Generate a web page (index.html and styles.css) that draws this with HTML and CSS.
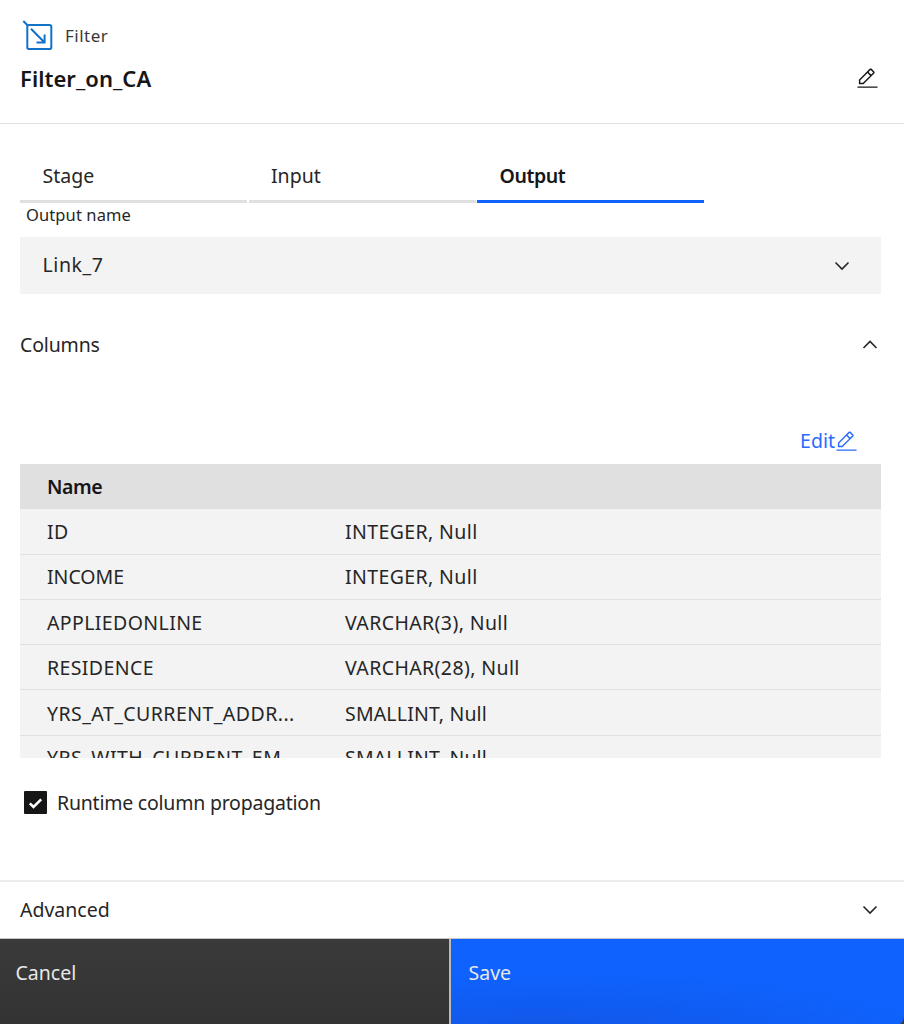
FILE: index.html
```html
<!DOCTYPE html>
<html lang="en">
<head>
<meta charset="utf-8">
<title>Filter_on_CA</title>
<link rel="stylesheet" href="styles.css">
</head>
<body>
<main class="panel">
  <header class="header">
    <div class="stage-type">
      <svg class="stage-icon" width="32" height="32" viewBox="0 0 32 32" fill="none" stroke="#1272c8" stroke-width="2">
        <rect x="5.300" y="5" width="24" height="24" rx="1.800"/>
        <path d="M1.300 1l4.200 4.200M9 8.700l13.300 13.600M14.500 22.600H22.600V14.500"/>
      </svg>
      <span class="type-label">Filter</span>
    </div>
    <div class="title-row">
      <h1 class="title">Filter_on_CA</h1>
      <svg class="pencil" width="23" height="23" viewBox="0 0 32 32" fill="currentColor"><path d="M2 27h28v2H2zM25.400 9c.8-.8.8-2 0-2.800l-3.600-3.600c-.8-.8-2-.8-2.800 0l-15 15V24h6.400l15-15zm-5-5L24 7.600l-3 3L17.400 7l3-3zM6 22v-3.600l10-10 3.600 3.600-10 10H6z"/></svg>
    </div>
  </header>
  <nav class="tabs">
    <a class="tab tab-stage">Stage</a>
    <a class="tab tab-input">Input</a>
    <a class="tab tab-output active">Output</a>
  </nav>
  <label class="field-label">Output name</label>
  <div class="select">
    <span class="link-name">Link_7</span>
    <svg width="16" height="10" viewBox="0 0 16 10" fill="none" stroke="#262626" stroke-width="1.600"><path d="M1.500 1.500L8 8l6.500-6.500"/></svg>
  </div>
  <section class="section-head">
    <span class="columns-label">Columns</span>
    <svg width="16" height="10" viewBox="0 0 16 10" fill="none" stroke="#262626" stroke-width="1.600"><path d="M1.500 8L8 1.500l6.500 6.500"/></svg>
  </section>
  <div class="edit">
    <span class="edit-label">Edit</span>
    <svg class="pencil" width="23" height="23" viewBox="0 0 32 32" fill="currentColor"><path d="M2 27h28v2H2zM25.400 9c.8-.8.8-2 0-2.800l-3.600-3.600c-.8-.8-2-.8-2.800 0l-15 15V24h6.400l15-15zm-5-5L24 7.600l-3 3L17.400 7l3-3zM6 22v-3.600l10-10 3.600 3.600-10 10H6z"/></svg>
  </div>
  <div class="table">
    <div class="row head"><span class="name-head">Name</span></div>
    <div class="row"><span>ID</span><span>INTEGER, Null</span></div>
    <div class="row income"><span class="tight">INCOME</span><span>INTEGER, Null</span></div>
    <div class="row"><span>APPLIEDONLINE</span><span>VARCHAR(3), Null</span></div>
    <div class="row"><span>RESIDENCE</span><span>VARCHAR(28), Null</span></div>
    <div class="row"><span class="long">YRS_AT_CURRENT_ADDR...</span><span class="smallint">SMALLINT, Null</span></div>
    <div class="row last"><span class="long">YRS_WITH_CURRENT_EM...</span><span class="smallint">SMALLINT, Null</span></div>
  </div>
  <div class="check-row">
    <svg width="23" height="23" viewBox="0 0 23 23"><rect width="23" height="23" rx="1" fill="#161616"/><path d="M5.800 12.300l3.700 3.700 7.700-7.700" fill="none" stroke="#fff" stroke-width="2.600"/></svg>
    <span class="check-label">Runtime column propagation</span>
  </div>
  <section class="advanced">
    <span class="advanced-label">Advanced</span>
    <svg width="16" height="10" viewBox="0 0 16 10" fill="none" stroke="#262626" stroke-width="1.600"><path d="M1.500 1.500L8 8l6.500-6.500"/></svg>
  </section>
  <footer class="footer">
    <button class="cancel"><span>Cancel</span></button>
    <button class="save"><span>Save</span></button>
  </footer>
</main>
</body>
</html>
```
FILE: styles.css
```css
* { box-sizing: border-box; }
body { margin: 0; background: #fff; }
.panel {
  width: 904px; height: 1024px; overflow: hidden;
  display: flex; flex-direction: column;
  font: 19.500px/28px "Noto Sans", sans-serif;
  color: #262626;
}
.panel > * { flex-shrink: 0; }
svg { display: block; flex-shrink: 0; }
span, h1 { white-space: nowrap; }
.header { height: 124px; border-bottom: 1px solid #e0e0e0; padding: 20px 25px 0 20px; }
.stage-type { display: flex; align-items: center; height: 32px; }
.stage-icon { margin-left: 2px; margin-right: 11px; }
.type-label { font-size: 17px; letter-spacing: .5px; color: #393939; }
.title-row { display: flex; justify-content: space-between; align-items: center; height: 32px; margin-top: 10px; }
.title { margin: 0; font-size: 22px; line-height: 32px; font-weight: 600; letter-spacing: .05px; color: #161616; }
.title-row .pencil { color: #161616; }
.tabs { display: flex; gap: 1.500px; height: 55px; margin: 24px 0 0 20px; }
.tab { width: 227px; height: 55px; padding: 14px 0 0 22.500px; border-bottom: 3px solid #e0e0e0; }
.active { border-color: #0f62fe; font-weight: 600; letter-spacing: -.4px; color: #161616; }
.field-label { font-size: 16.500px; line-height: 24px; height: 34px; padding-left: 26px; letter-spacing: .1px; }
.select { height: 57px; margin: 0 23px 0 20px; padding: 0 31px 0 22.500px; background: #f3f3f3; display: flex; justify-content: space-between; align-items: center; }
.link-name { letter-spacing: .6px; padding-bottom: 1px; }
.section-head { display: flex; justify-content: space-between; align-items: center; height: 28px; margin: 37px 26px 0 20px; }
.columns-label { letter-spacing: -.15px; }
.edit { display: flex; justify-content: flex-end; align-items: center; height: 28px; margin: 68px 46px 0 0; color: #2b6bfe; }
.table { height: 294px; margin: 9px 23px 0 20px; background: #f3f3f3; overflow: hidden; }
.row { display: grid; grid-template-columns: 298px 1fr; align-items: center; height: 45.300px; padding: 2px 0 0 27px; border-bottom: 1px solid #e0e0e0; letter-spacing: .39px; }
.income, .last { padding-top: 0; }
.tight { letter-spacing: 0; }
.long { letter-spacing: .45px; }
.smallint { letter-spacing: .17px; }
.head { background: #e0e0e0; font-weight: 600; letter-spacing: -.45px; color: #161616; }
.check-row { display: flex; align-items: center; gap: 10px; height: 28px; margin: 31px 0 0 24px; }
.check-row svg { margin-bottom: 1px; }
.check-label { letter-spacing: -.22px; }
.advanced { display: flex; justify-content: space-between; align-items: center; height: 59px; margin-top: 63px; padding: 0 26px 0 20px; border-top: 2px solid #ececec; border-bottom: 1px solid #c6c6c6; }
.footer { display: grid; grid-template-columns: 451px 1fr; height: 85px; background: #393939; }
.footer button { font: inherit; text-align: left; border: 0; color: #e8e8e8; padding: 20px 15.500px; display: flex; align-items: flex-start; }
.footer .cancel { background: linear-gradient(#3a3a3a, #333); border-right: 2px solid #bababa; }
.footer .save { padding-left: 17.500px; border-bottom-right-radius: 4px 10px; background: radial-gradient(ellipse 400px 65px at 20% 115%, #1256e4, rgba(15, 98, 254, 0)), #0f62fe; }
```
